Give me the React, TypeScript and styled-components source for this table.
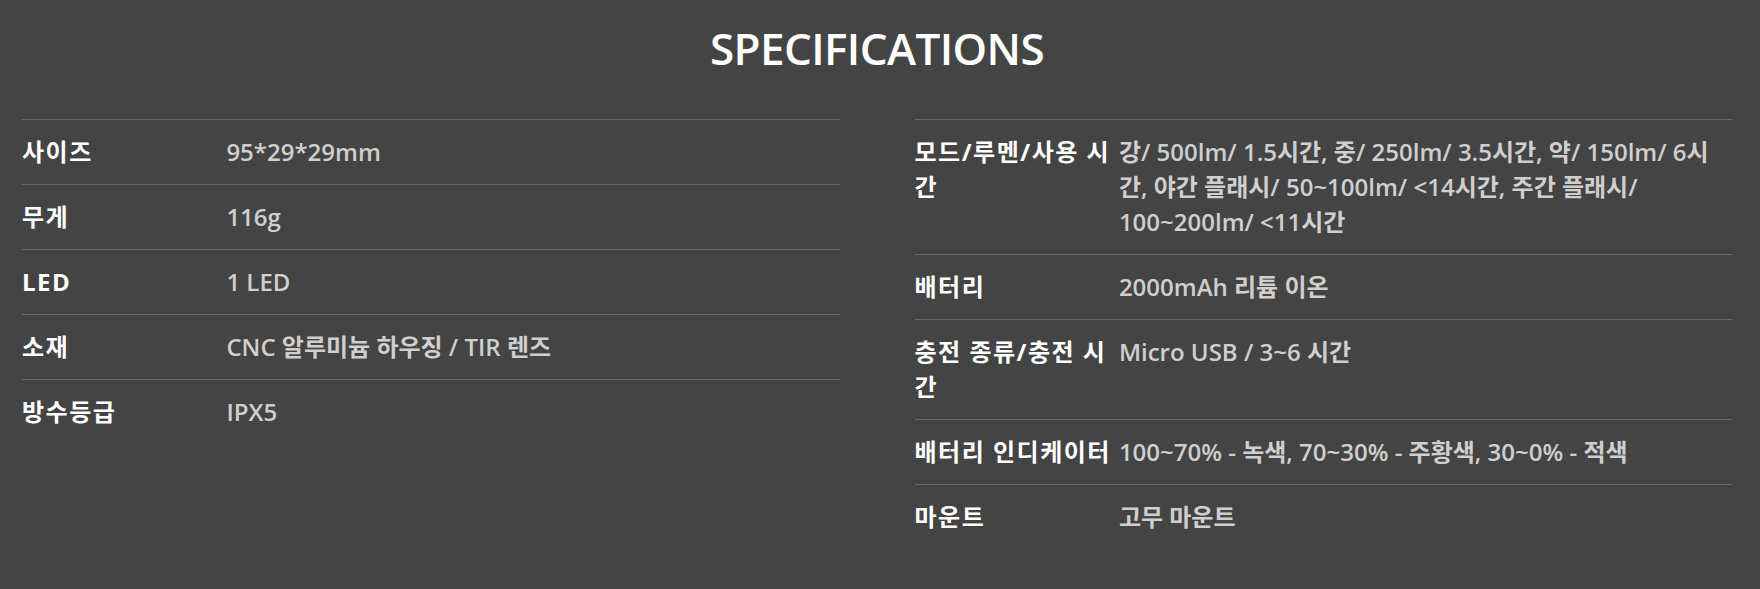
import { ReactElement } from 'react'
import styled, { createGlobalStyle } from 'styled-components'

const GlobalStyle = createGlobalStyle`
  html, body {
    margin: 0;
    padding: 0;
    background: #444444;
  }
  body {
    font-family: 'Open Sans', 'Noto Sans CJK KR', sans-serif;
  }
`

const StyledSection = styled.section`
  background: #444444;
  min-height: 589px;
  box-sizing: border-box;
  padding: 18px 28px 0 22px;
`

const StyledTitle = styled.h2`
  margin: 0 0 41px;
  text-align: center;
  color: #ffffff;
  font-size: 44px;
  font-weight: 600;
  line-height: 60px;
  letter-spacing: -0.6px;
`

const StyledColumns = styled.div`
  display: grid;
  grid-template-columns: 1fr 1fr;
  column-gap: 75px;
  align-items: start;
`

const StyledTable = styled.table`
  width: 100%;
  border-collapse: collapse;
  table-layout: fixed;
`

const StyledRow = styled.tr`
  border-top: 1px solid #686868;
`

const StyledLabel = styled.th`
  width: 25%;
  padding: 14px 0 15px;
  text-align: left;
  vertical-align: top;
  color: #ffffff;
  font-size: 24px;
  font-weight: 700;
  line-height: 35px;
  letter-spacing: 1.5px;
`

const StyledValue = styled.td`
  padding: 14px 0 15px;
  vertical-align: top;
  color: #cfcfcf;
  font-size: 24px;
  font-weight: 600;
  line-height: 35px;
`

type Spec = { label: string; value: string }

const leftSpecs: Spec[] = [
  { label: '사이즈', value: '95*29*29mm' },
  { label: '무게', value: '116g' },
  { label: 'LED', value: '1 LED' },
  { label: '소재', value: 'CNC 알루미늄 하우징 / TIR 렌즈' },
  { label: '방수등급', value: 'IPX5' },
]

const rightSpecs: Spec[] = [
  {
    label: '모드/루멘/사용 시간',
    value:
      '강/ 500lm/ 1.5시간, 중/ 250lm/ 3.5시간, 약/ 150lm/ 6시간, 야간 플래시/ 50~100lm/ <14시간, 주간 플래시/ 100~200lm/ <11시간',
  },
  { label: '배터리', value: '2000mAh 리튬 이온' },
  { label: '충전 종류/충전 시간', value: 'Micro USB / 3~6 시간' },
  { label: '배터리 인디케이터', value: '100~70% - 녹색, 70~30% - 주황색, 30~0% - 적색' },
  { label: '마운트', value: '고무 마운트' },
]

const SpecTable = ({ specs }: { specs: Spec[] }): ReactElement => (
  <StyledTable>
    <tbody>
      {specs.map((spec) => (
        <StyledRow key={spec.label}>
          <StyledLabel>{spec.label}</StyledLabel>
          <StyledValue>{spec.value}</StyledValue>
        </StyledRow>
      ))}
    </tbody>
  </StyledTable>
)

export default function App(): ReactElement {
  return (
    <>
      <GlobalStyle />
      <StyledSection>
        <StyledTitle>SPECIFICATIONS</StyledTitle>
        <StyledColumns>
          <SpecTable specs={leftSpecs} />
          <SpecTable specs={rightSpecs} />
        </StyledColumns>
      </StyledSection>
    </>
  )
}
